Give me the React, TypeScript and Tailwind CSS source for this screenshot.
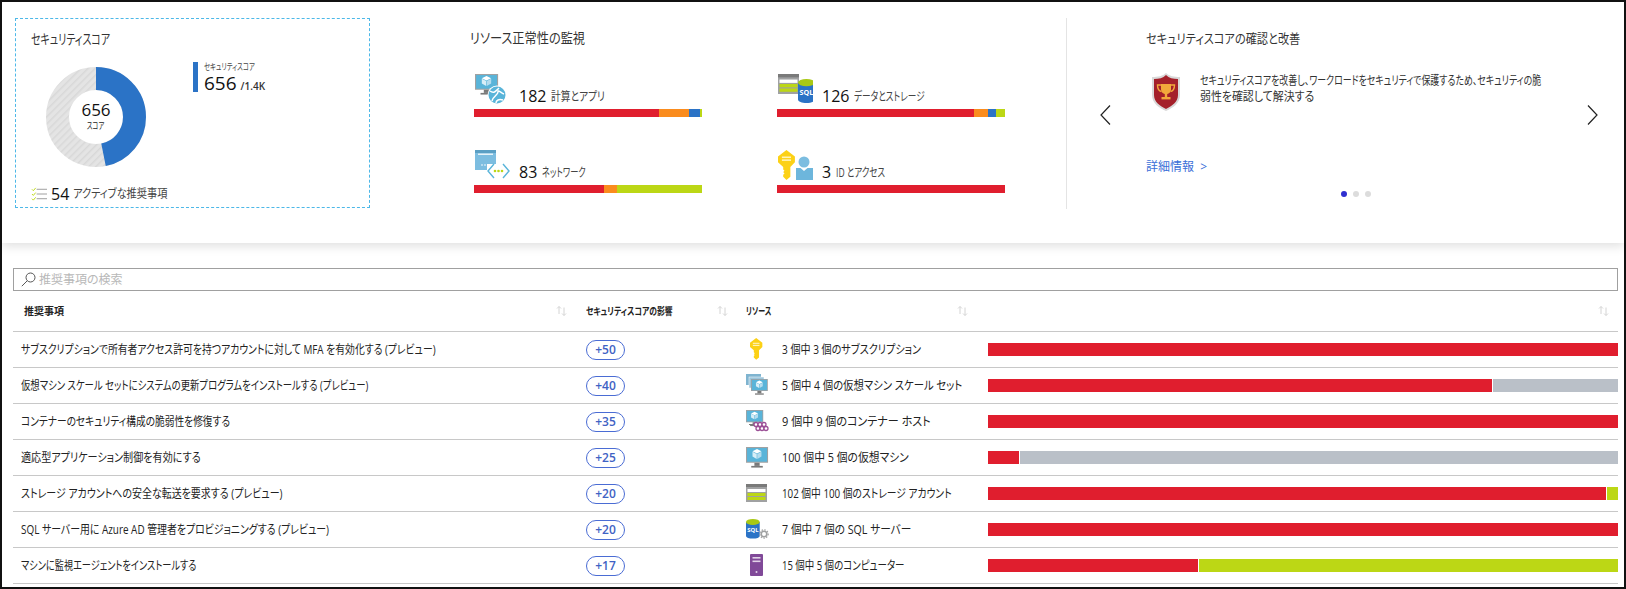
import type { ReactNode } from 'react'

type Seg = { color: string; width: number }

const RED = '#e01e2e'
const ORANGE = '#fa8c1e'
const BLUE = '#2b73c6'
const LIME = '#bcd715'
const GRAY = '#bac0c8'

// --- icons ---

function Cube({ x, y, s = 1 }: { x: number; y: number; s?: number }) {
  return (
    <g transform={`translate(${x} ${y}) scale(${s})`}>
      <polygon points="5,0 10,2.5 5,5 0,2.5" fill="#ffffff" />
      <polygon points="0,3 4.7,5.4 4.7,11 0,8.4" fill="#d8eef7" />
      <polygon points="10,3 5.3,5.4 5.3,11 10,8.4" fill="#b5dcee" />
    </g>
  )
}

function Monitor({ x = 0, y = 0, s = 1 }: { x?: number; y?: number; s?: number }) {
  return (
    <g transform={`translate(${x} ${y}) scale(${s})`}>
      <rect width="21" height="15" fill="#a0a1a2" />
      <rect x="1" y="1" width="19" height="13" fill="#59b4d9" />
      <Cube x={6.2} y={2} s={0.85} />
      <rect x="8" y="15" width="5" height="3" fill="#7a7a7a" />
      <rect x="5" y="18" width="11" height="1.6" fill="#7a7a7a" />
    </g>
  )
}

function Storage({ x = 0, y = 0, w = 21, h = 18 }: { x?: number; y?: number; w?: number; h?: number }) {
  return (
    <g transform={`translate(${x} ${y}) scale(${w / 21} ${h / 18})`}>
      <rect width="21" height="18" fill="#a0a1a2" />
      <rect width="21" height="3" fill="#7a7a7a" />
      <rect x="1.5" y="5" width="18" height="3" fill="#ffffff" />
      <rect x="1.5" y="9" width="18" height="3" fill={LIME} />
      <rect x="1.5" y="13" width="18" height="3" fill={LIME} />
    </g>
  )
}

function Cylinder({ x = 0, y = 0, s = 1 }: { x?: number; y?: number; s?: number }) {
  return (
    <g transform={`translate(${x} ${y}) scale(${s})`}>
      <path d="M0 3v14c0 1.8 3.2 3 7 3s7-1.2 7-3V3z" fill={BLUE} />
      <ellipse cx="7" cy="3" rx="7" ry="3" fill="#a9c814" />
      <text x="7" y="13.5" textAnchor="middle" fontSize="6" fontWeight="700" fill="#ffffff" fontFamily="'Open Sans', sans-serif">SQL</text>
    </g>
  )
}

function KeyShape({ x = 0, y = 0, s = 1 }: { x?: number; y?: number; s?: number }) {
  return (
    <g transform={`translate(${x} ${y}) scale(${s})`}>
      <path d="M6.5 0L13 5v4.5L9.5 13v7.5L6.5 23 4 20.5v-1.5l1-1-1-1 1-1-1-1V13L0 9.5V5z" fill="#fcd116" />
      <rect x="3" y="5" width="7" height="1.2" fill="#fff3b8" />
      <rect x="3" y="7.2" width="7" height="1.2" fill="#fff3b8" />
    </g>
  )
}

function Gear({ x, y }: { x: number; y: number }) {
  return (
    <g transform={`translate(${x} ${y})`}>
      <circle cx="4" cy="4" r="2.8" fill="none" stroke="#a0a1a2" strokeWidth="1.6" />
      <circle cx="4" cy="4" r="4.2" fill="none" stroke="#a0a1a2" strokeWidth="1.2" strokeDasharray="1.4 1.4" />
    </g>
  )
}

function Resource({ kind }: { kind: string }) {
  return (
    <svg width="23" height="23" viewBox="0 0 23 23">
      {kind === 'key' && <KeyShape x={4} y={0} s={0.95} />}
      {kind === 'scale' && (
        <>
          <rect x="0" y="0" width="15" height="11" fill="#7fb4d0" />
          <rect x="3" y="3" width="15" height="11" fill="#9cc6dc" stroke="#ffffff" strokeWidth="0.5" />
          <Monitor x={5} y={5} s={0.8} />
        </>
      )}
      {kind === 'container' && (
        <>
          <Monitor x={0} y={0} s={0.82} />
          <rect x="3" y="14" width="6" height="1" fill="#7a7a7a" />
          {[9, 13, 17, 11, 15, 19].map((cx, i) => (
            <circle key={i} cx={cx + 1} cy={i < 3 ? 14.5 : 18.5} r="2" fill="#ffffff" stroke="#9b4f96" strokeWidth="1.3" />
          ))}
        </>
      )}
      {kind === 'vm' && <Monitor x={0} y={1} s={1.05} />}
      {kind === 'storage' && <Storage x={0} y={2} w={21} h={18} />}
      {kind === 'sql' && (
        <>
          <Cylinder x={0} y={1} s={0.98} />
          <Gear x={14} y={12} />
        </>
      )}
      {kind === 'server' && (
        <>
          <rect x="4" y="0" width="13" height="22" rx="1" fill="#804998" />
          <rect x="6.5" y="3" width="8" height="1.6" fill="#e2d3e8" />
          <rect x="6.5" y="6.5" width="8" height="1.6" fill="#e2d3e8" />
          <circle cx="10.5" cy="18" r="1" fill="#e2d3e8" />
        </>
      )}
    </svg>
  )
}

function ComputeIcon() {
  return (
    <svg width="32" height="31" viewBox="0 0 32 31">
      <g transform="scale(1.1 1.05)">
        <Monitor />
      </g>
      <circle cx="22" cy="21" r="9.5" fill="#ffffff" />
      <circle cx="22" cy="21" r="8.5" fill="#59b4d9" />
      <path d="M15 17c4 3 6 0 9-3M17 27c1-5 6-6 6-9s3 1 6 2M21 29c0-3 3-4 7-3" fill="none" stroke="#ffffff" strokeWidth="1.5" />
    </svg>
  )
}

function DataIcon() {
  return (
    <svg width="35" height="31" viewBox="0 0 35 31">
      <Storage x={0} y={0} w={21} h={20} />
      <Cylinder x={20} y={5} s={1.2} />
    </svg>
  )
}

function NetworkIcon() {
  return (
    <svg width="36" height="31" viewBox="0 0 36 31">
      <rect width="21" height="20" fill="#7cbde0" />
      <rect width="21" height="3" fill="#5a9fc4" />
      <rect x="3" y="3.5" width="15" height="1.5" fill="#e5f2f8" />
      <circle cx="7" cy="15" r="0.8" fill="#ffffff" />
      <circle cx="10" cy="15" r="0.8" fill="#ffffff" />
      <circle cx="13" cy="15" r="0.8" fill="#ffffff" />
      <rect x="12" y="14" width="20" height="15" fill="#ffffff" />
      <path d="M19 14l-6 7 6 7M28 14l6 7-6 7" fill="none" stroke="#59b4d9" strokeWidth="1.4" />
      <circle cx="20" cy="21" r="1.3" fill={LIME} />
      <circle cx="23.5" cy="21" r="1.3" fill={LIME} />
      <circle cx="27" cy="21" r="1.3" fill={LIME} />
    </svg>
  )
}

function IdentityIcon() {
  return (
    <svg width="36" height="31" viewBox="0 0 36 31">
      <KeyShape x={0} y={0} s={1.3} />
      <circle cx="26" cy="12" r="5.5" fill="#7cbde0" />
      <path d="M18 18h4.5l3.5 3 3.5-3H35v12H18z" fill="#6db6dc" />
    </svg>
  )
}

function ShieldIcon() {
  return (
    <svg width="30" height="38" viewBox="0 0 30 38" className="shrink-0">
      <path d="M15 0c3 3 8 4 14 4v18c0 8-7 13-14 16C8 35 1 30 1 22V4c6 0 11-1 14-4z" fill="#d9d9d9" />
      <path d="M15 2c3 3 7 4 12 4v16c0 7-6 11-12 14C9 33 3 29 3 22V6c5 0 9-1 12-4z" fill="#a4202a" />
      <path d="M10 11h10v5c0 3-2 5-5 5s-5-2-5-5z" fill="#f2a93b" />
      <path d="M10 12H6.500c0 4 1.500 6 4 6.500M20 12h3.500c0 4-1.500 6-4 6.500" fill="none" stroke="#f2a93b" strokeWidth="1.4" />
      <rect x="13.800" y="20" width="2.400" height="4" fill="#f2a93b" />
      <rect x="10.500" y="24" width="9" height="2.400" fill="#f2a93b" />
    </svg>
  )
}

function SortArrows() {
  return (
    <svg width="11" height="10" viewBox="0 0 11 10" className="shrink-0">
      <path d="M3 8V0.500M1 2.500l2-2 2 2" fill="none" stroke="#d4d4d4" strokeWidth="1" />
      <path d="M8 1.500v8M6 7.500l2 2 2-2" fill="none" stroke="#d4d4d4" strokeWidth="1" />
    </svg>
  )
}

function Chevron({ dir }: { dir: 'left' | 'right' }) {
  return (
    <svg width="11" height="20" viewBox="0 0 11 20" className="shrink-0">
      <path d={dir === 'left' ? 'M10 0.500L1 10l9 9.500' : 'M1 0.500L10 10l-9 9.500'} fill="none" stroke="#222222" strokeWidth="1.200" />
    </svg>
  )
}

// --- pieces ---

// the reference's kana are set much narrower than any installed font, so text is squeezed sideways
function Narrow({ className, children }: { className?: string; children: ReactNode }) {
  return <span className={`block origin-left whitespace-nowrap ${className ?? ''}`}>{children}</span>
}

function Bar({ segs, height, gap }: { segs: Seg[]; height: string; gap?: boolean }) {
  return (
    <div className={`flex ${height} ${gap ? 'gap-px' : ''}`}>
      {segs.map((s, i) => (
        <div key={i} style={{ flexGrow: s.width, flexBasis: 0, backgroundColor: s.color }} />
      ))}
    </div>
  )
}

function Donut() {
  return (
    <div className="relative h-[100px] w-[100px] shrink-0">
      <svg width="100" height="100" viewBox="0 0 100 100">
        <defs>
          <pattern id="hatch" width="5" height="5" patternUnits="userSpaceOnUse" patternTransform="rotate(-45)">
            <rect width="5" height="5" fill="#e4e4e4" />
            <rect width="5" height="1.500" fill="#d8d8d8" />
          </pattern>
        </defs>
        <circle cx="50" cy="50" r="38.500" fill="none" stroke="url(#hatch)" strokeWidth="23" />
        <circle
          cx="50"
          cy="50"
          r="38.500"
          fill="none"
          stroke={BLUE}
          strokeWidth="23"
          strokeDasharray="113.200 241.900"
          transform="rotate(-90 50 50)"
        />
      </svg>
      <div className="absolute inset-0 flex flex-col items-center justify-center">
        <span className="mt-[-2px] text-[17px] leading-[20px] text-[#111]">656</span>
        <span className="scale-x-[0.7] text-[9px] leading-[12px] text-[#222]">スコア</span>
      </div>
    </div>
  )
}

function HealthCell({ icon, count, label, labelClass, segs }: { icon: ReactNode; count: string; label: string; labelClass: string; segs: Seg[] }) {
  return (
    <div className="flex h-[43px] w-[228px] flex-col justify-between">
      <div className="flex h-[35px] items-end">
        <div className="h-[35px] w-[45px] shrink-0 pl-[1px]">{icon}</div>
        <span className="mb-[2px] text-[16px] leading-[22px] text-[#111]">{count}</span>
        <Narrow className={`mb-[1px] ml-[5px] text-[12px] leading-[22px] text-[#444] ${labelClass}`}>{label}</Narrow>
      </div>
      <Bar segs={segs} height="h-[8px]" />
    </div>
  )
}

const rows = [
  { title: 'サブスクリプションで所有者アクセス許可を持つアカウントに対して MFA を有効化する (プレビュー)', titleClass: 'scale-x-[0.82]', score: '+50', icon: 'key', res: '3 個中 3 個のサブスクリプション', resClass: 'scale-x-[0.84]', segs: [{ color: RED, width: 630 }] },
  { title: '仮想マシン スケール セットにシステムの更新プログラムをインストールする (プレビュー)', titleClass: 'scale-x-[0.78]', score: '+40', icon: 'scale', res: '5 個中 4 個の仮想マシン スケール セット', resClass: 'scale-x-[0.865]', segs: [{ color: RED, width: 504 }, { color: GRAY, width: 125 }] },
  { title: 'コンテナーのセキュリティ構成の脆弱性を修復する', titleClass: 'scale-x-[0.81]', score: '+35', icon: 'container', res: '9 個中 9 個のコンテナー ホスト', resClass: 'scale-x-[0.92]', segs: [{ color: RED, width: 630 }] },
  { title: '適応型アプリケーション制御を有効にする', titleClass: 'scale-x-[0.84]', score: '+25', icon: 'vm', res: '100 個中 5 個の仮想マシン', resClass: 'scale-x-[0.9]', segs: [{ color: RED, width: 31 }, { color: GRAY, width: 598 }] },
  { title: 'ストレージ アカウントへの安全な転送を要求する (プレビュー)', titleClass: 'scale-x-[0.83]', score: '+20', icon: 'storage', res: '102 個中 100 個のストレージ アカウント', resClass: 'scale-x-[0.815]', segs: [{ color: RED, width: 618 }, { color: LIME, width: 11 }] },
  { title: 'SQL サーバー用に Azure AD 管理者をプロビジョニングする (プレビュー)', titleClass: 'scale-x-[0.825]', score: '+20', icon: 'sql', res: '7 個中 7 個の SQL サーバー', resClass: 'scale-x-[0.89]', segs: [{ color: RED, width: 630 }] },
  { title: 'マシンに監視エージェントをインストールする', titleClass: 'scale-x-[0.765]', score: '+17', icon: 'server', res: '15 個中 5 個のコンピューター', resClass: 'scale-x-[0.79]', segs: [{ color: RED, width: 210 }, { color: LIME, width: 419 }] },
]

export default function App() {
  return (
    <div className="h-[589px] w-[1626px] overflow-hidden border-2 border-[#111] bg-white font-['Open_Sans','Noto_Sans_CJK_JP',sans-serif] [font-feature-settings:'palt'] text-[#222]">
      {/* top summary */}
      <div className="relative flex h-[241px] bg-white pt-[16px] shadow-[0_3px_10px_rgba(0,0,0,0.13)]">
        {/* score card */}
        <div className="ml-[13px] h-[190px] w-[355px] shrink-0 border border-dashed border-[#4db8e8] pl-[15px] pt-[10px]">
          <Narrow className="scale-x-[0.71] text-[14px] leading-[20px] text-[#333]">セキュリティスコア</Narrow>
          <div className="flex items-start">
            <div className="ml-[15px] mt-[18px]">
              <Donut />
            </div>
            <div className="ml-[47px] mt-[13px] flex h-[30px] items-stretch">
              <div className="w-[5px] bg-[#2b73c6]" />
              <div className="ml-[6px]">
                <Narrow className="scale-x-[0.71] text-[9px] leading-[10px] text-[#444]">セキュリティスコア</Narrow>
                <div className="flex items-baseline">
                  <span className="text-[19px] leading-[22px] text-[#111]">656</span>
                  <span className="ml-[4px] text-[10px] font-semibold leading-[22px] text-[#333]">/1.4K</span>
                </div>
              </div>
            </div>
          </div>
          <div className="mt-[18px] flex items-center">
            <svg width="16" height="14" viewBox="0 0 17 14" className="mr-[4px] shrink-0">
              <path d="M6 2h11M6 7h11M6 12h11" stroke="#9a9a9a" strokeWidth="1" />
              <path d="M1 2l1.500 1.500L5 0.500M1 7l1.500 1.500L5 5.500M1 12l1.500 1.500L5 10.500" fill="none" stroke="#bcd715" strokeWidth="1" />
            </svg>
            <span className="text-[16px] leading-[18px] text-[#111]">54</span>
            <Narrow className="ml-[4px] scale-x-[0.85] text-[12px] leading-[18px] text-[#444]">アクティブな推奨事項</Narrow>
          </div>
        </div>

        {/* resource health */}
        <div className="ml-[100px] w-[596px] shrink-0 pt-[10px]">
          <Narrow className="scale-x-[0.87] text-[14px] leading-[20px] text-[#333]">リソース正常性の監視</Narrow>
          <div className="mt-[26px] grid grid-cols-[303px_228px] gap-y-[33px] pl-[4px]">
            <HealthCell
              icon={<ComputeIcon />}
              count="182"
              label="計算とアプリ"
              labelClass="scale-x-[0.81]"
              segs={[{ color: RED, width: 184 }, { color: ORANGE, width: 30 }, { color: BLUE, width: 11 }, { color: LIME, width: 2 }]}
            />
            <HealthCell
              icon={<DataIcon />}
              count="126"
              label="データとストレージ"
              labelClass="scale-x-[0.72]"
              segs={[{ color: RED, width: 197 }, { color: ORANGE, width: 14 }, { color: BLUE, width: 8 }, { color: LIME, width: 9 }]}
            />
            <HealthCell
              icon={<NetworkIcon />}
              count="83"
              label="ネットワーク"
              labelClass="scale-x-[0.69]"
              segs={[{ color: RED, width: 129 }, { color: ORANGE, width: 13 }, { color: LIME, width: 85 }]}
            />
            <HealthCell icon={<IdentityIcon />} count="3" label="ID とアクセス" labelClass="scale-x-[0.71]" segs={[{ color: RED, width: 228 }]} />
          </div>
        </div>

        {/* carousel */}
        <div className="flex h-[191px] flex-1 border-l border-[#e4e4e4] pl-[33px]">
          <div className="mt-[87px]">
            <Chevron dir="left" />
          </div>
          <div className="ml-[35px] w-[420px] shrink-0 pt-[10px]">
            <Narrow className="scale-x-[0.86] text-[13px] leading-[20px] text-[#333]">セキュリティスコアの確認と改善</Narrow>
            <div className="mt-[25px] flex h-[38px] pl-[5px]">
              <ShieldIcon />
              <div className="ml-[19px] text-[12px] leading-[15px] text-[#333]">
                <Narrow className="scale-x-[0.745]">セキュリティスコアを改善し、ワークロードをセキュリティで保護するため、セキュリティの脆</Narrow>
                <Narrow className="mt-[1px] scale-x-[0.91]">弱性を確認して解決する</Narrow>
              </div>
            </div>
            <div className="mt-[48px] text-[12px] leading-[16px] text-[#3b6fd8]">詳細情報 &nbsp;&gt;</div>
            <div className="mt-[16px] flex justify-center gap-[6px]">
              <span className="h-[6px] w-[6px] rounded-full bg-[#2f2fd0]" />
              <span className="h-[6px] w-[6px] rounded-full bg-[#dcdcdc]" />
              <span className="h-[6px] w-[6px] rounded-full bg-[#dcdcdc]" />
            </div>
          </div>
          <div className="ml-[21px] mt-[87px]">
            <Chevron dir="right" />
          </div>
        </div>
      </div>

      {/* recommendations */}
      <div className="ml-[11px] mr-[6px] mt-[25px]">
        <div className="flex h-[23px] items-center border border-[#a0a0a0] pl-[7px]">
          <svg width="15" height="15" viewBox="0 0 15 15" className="shrink-0">
            <circle cx="9.500" cy="5.500" r="4.500" fill="none" stroke="#555555" strokeWidth="1" />
            <path d="M6.200 8.800L0.800 14.200" stroke="#555555" strokeWidth="1" />
          </svg>
          <span className="ml-[3px] text-[12px] leading-[16px] text-[#b8b8b8]">推奨事項の検索</span>
        </div>

        <div className="flex h-[41px] items-center border-b border-[#c8c8c8] text-[10px] font-bold text-[#222]">
          <div className="flex w-[573px] shrink-0 items-center justify-between pl-[11px] pr-[19px]">
            <span>推奨事項</span>
            <SortArrows />
          </div>
          <div className="flex w-[160px] shrink-0 items-center justify-between pr-[18px]">
            <Narrow className="scale-x-[0.78]">セキュリティスコアの影響</Narrow>
            <SortArrows />
          </div>
          <div className="flex w-[240px] shrink-0 items-center justify-between pr-[18px]">
            <Narrow className="scale-x-[0.7]">リソース</Narrow>
            <SortArrows />
          </div>
          <div className="flex flex-1 items-center justify-end pr-[9px]">
            <SortArrows />
          </div>
        </div>

        {rows.map((r) => (
          <div key={r.title} className="flex h-[36px] items-center border-b border-[#c8c8c8]">
            <div className="w-[573px] shrink-0 pl-[8px] text-[12px] text-[#222]">
              <Narrow className={r.titleClass}>{r.title}</Narrow>
            </div>
            <div className="w-[160px] shrink-0">
              <span className="flex h-[20px] w-[39px] items-center justify-center rounded-full border border-[#4a6cd4] text-[12px] font-semibold text-[#3f62c4]">
                {r.score}
              </span>
            </div>
            <div className="flex w-[242px] shrink-0 items-center text-[12px] text-[#222]">
              <div className="h-[23px] w-[36px] shrink-0">
                <Resource kind={r.icon} />
              </div>
              <Narrow className={r.resClass}>{r.res}</Narrow>
            </div>
            <div className="flex-1">
              <Bar segs={r.segs} height="h-[13px]" gap />
            </div>
          </div>
        ))}
      </div>
    </div>
  )
}
